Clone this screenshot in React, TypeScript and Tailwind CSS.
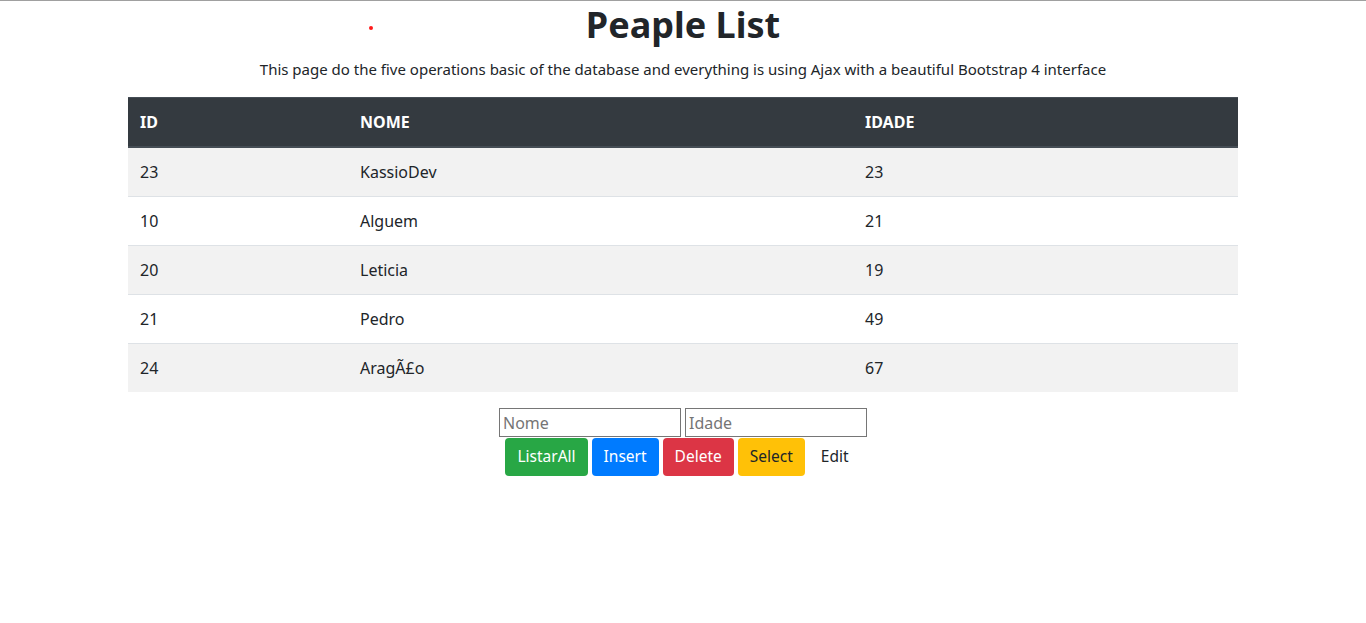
const people = [
  { id: 23, nome: "KassioDev", idade: 23 },
  { id: 10, nome: "Alguem", idade: 21 },
  { id: 20, nome: "Leticia", idade: 19 },
  { id: 21, nome: "Pedro", idade: 49 },
  { id: 24, nome: "AragÃ£o", idade: 67 },
];

export default function App() {
  return (
    <div className="relative min-h-[623px] border-t border-[#a0a0a0] bg-white text-[#212529] font-['Noto_Sans','Liberation_Sans',sans-serif]">
      {/* stray red dot */}
      <span className="absolute left-[369px] top-[25px] h-[4px] w-[4px] rounded-full bg-[#ff1a1a]" />

      <h1 className="text-center text-[36px] leading-[48px] font-bold">Peaple List</h1>
      <p className="mt-2 text-center text-[15px] leading-6">
        This page do the five operations basic of the database and everything is using Ajax with a beautiful Bootstrap 4 interface
      </p>

      <div className="mx-auto mt-4 w-[1110px]">
        <table className="w-full border-collapse text-base leading-6">
          <thead>
            <tr className="bg-[#343a40] text-white">
              <th className="w-[220px] border-t border-b-2 border-[#454d55] p-3 text-left font-bold">ID</th>
              <th className="w-[505px] border-t border-b-2 border-[#454d55] p-3 text-left font-bold">NOME</th>
              <th className="border-t border-b-2 border-[#454d55] p-3 text-left font-bold">IDADE</th>
            </tr>
          </thead>
          <tbody>
            {people.map((p, i) => (
              <tr key={p.id} className={i % 2 === 0 ? "bg-[#f2f2f2]" : "bg-white"}>
                <td className="border-t border-[#dee2e6] p-3">{p.id}</td>
                <td className="border-t border-[#dee2e6] p-3">{p.nome}</td>
                <td className="border-t border-[#dee2e6] p-3">{p.idade}</td>
              </tr>
            ))}
          </tbody>
        </table>

        <div className="mt-4 flex flex-col items-center">
          <div className="flex gap-1">
            <input
              placeholder="Nome"
              className="h-[29px] w-[182px] border border-[#767676] px-[3px] text-base text-[#212529] placeholder:text-[#757575] outline-none"
            />
            <input
              placeholder="Idade"
              className="h-[29px] w-[182px] border border-[#767676] px-[3px] text-base text-[#212529] placeholder:text-[#757575] outline-none"
            />
          </div>
          <div className="mt-px flex gap-1">
            <button className="h-[38px] rounded bg-[#28a745] px-3 text-[15.5px] text-white">ListarAll</button>
            <button className="h-[38px] rounded bg-[#007bff] px-3 text-[15.5px] text-white">Insert</button>
            <button className="h-[38px] rounded bg-[#dc3545] px-3 text-[15.5px] text-white">Delete</button>
            <button className="h-[38px] rounded bg-[#ffc107] px-3 text-[15.5px] text-[#212529]">Select</button>
            <button className="h-[38px] rounded px-3 text-[15.5px] text-[#212529]">Edit</button>
          </div>
        </div>
      </div>
    </div>
  );
}
